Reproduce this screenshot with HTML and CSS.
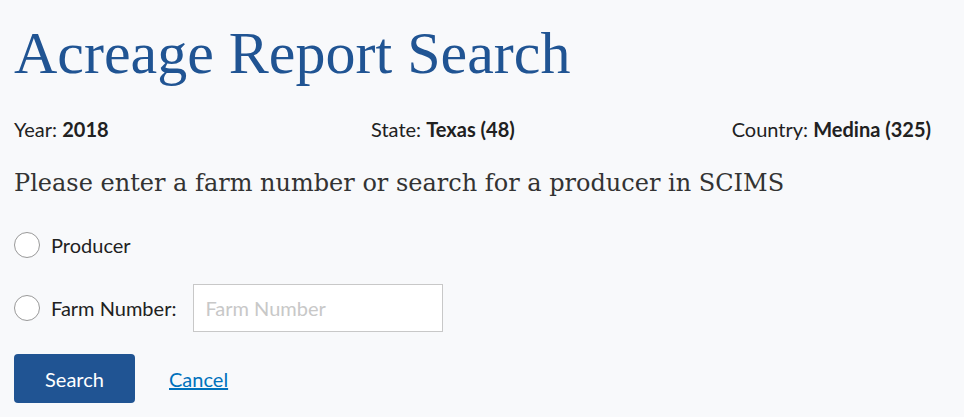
FILE: index.html
```html
<!DOCTYPE html>
<html>
<head>
<meta charset="utf-8">
<link rel="stylesheet" href="styles.css">
</head>
<body>
<main class="page">
  <h1 class="title">Acreage Report Search</h1>
  <div class="meta">
    <div class="meta-item">Year: <b>2018</b></div>
    <div class="meta-item">State: <b>Texas (48)</b></div>
    <div class="meta-item">Country: <b>Medina (325)</b></div>
  </div>
  <h2 class="subtitle">Please enter a farm number or search for a producer in SCIMS</h2>
  <div class="options">
    <label class="option"><span class="radio"></span><span class="label">Producer</span></label>
    <label class="option"><span class="radio"></span><span class="label">Farm Number:</span><input class="field" type="text" placeholder="Farm Number"></label>
  </div>
  <div class="actions">
    <button class="btn" type="button">Search</button>
    <a class="link" href="#">Cancel</a>
  </div>
</main>
</body>
</html>
```
FILE: styles.css
```css
html, body {
  margin: 0;
  padding: 0;
  background: #f8f9fb;
}
.page {
  padding: 0 33px 0 14px;
  font-family: "Lato", "Noto Sans", sans-serif;
  color: #212121;
}
.title {
  margin: 0;
  padding-top: 18px;
  font-family: "Liberation Serif", serif;
  font-weight: normal;
  font-size: 60px;
  line-height: 70px;
  color: #205493;
}
.meta {
  display: grid;
  grid-template-columns: 357px 1fr auto;
  margin-top: 29px;
  font-family: "Lato", sans-serif;
  font-size: 20px;
  line-height: 24px;
}
.meta b { font-weight: 700; }
.subtitle {
  margin: 27px 0 0;
  font-family: "DejaVu Serif", serif;
  font-weight: 300;
  font-size: 24px;
  line-height: 30px;
  color: #333;
}
.options {
  display: flex;
  flex-direction: column;
  gap: 26px;
  margin-top: 34px;
}
.option {
  display: flex;
  align-items: center;
  font-size: 20px;
  line-height: 24px;
  color: #212121;
}
.radio {
  width: 24px;
  height: 24px;
  border: 1px solid #999;
  border-radius: 50%;
  background: #fff;
  margin-right: 11px;
}
.option .label { margin-right: 17px; }
.field {
  box-sizing: border-box;
  width: 250px;
  height: 48px;
  border: 1px solid #c8c8c8;
  background: #fff;
  padding: 0 11px;
  font-family: "Lato", sans-serif;
  font-size: 20px;
  outline: none;
}
.field::placeholder { color: #c8c8c8; }
.actions {
  display: flex;
  align-items: center;
  gap: 34px;
  margin-top: 22px;
}
.btn {
  width: 121px;
  height: 49px;
  border: 0;
  border-radius: 4px;
  background: #205493;
  color: #fff;
  font-family: "Lato", sans-serif;
  font-size: 20px;
}
.link {
  color: #0071bc;
  font-size: 20px;
  text-decoration: underline;
}
```
